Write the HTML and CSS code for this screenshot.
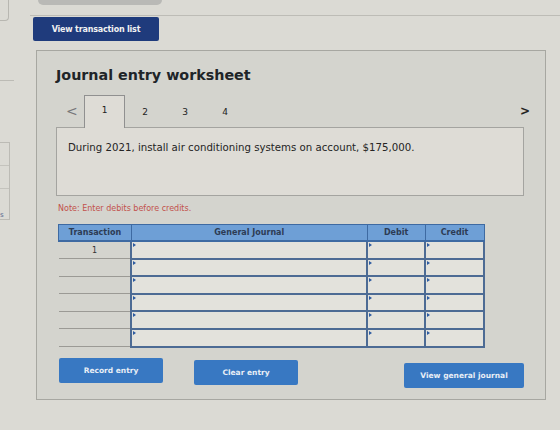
FILE: index.html
```html
<!DOCTYPE html>
<html lang="en">
<head>
  <meta charset="UTF-8" />
  <meta name="viewport" content="width=device-width, initial-scale=1.0" />
  <title>Journal entry worksheet</title>
  <link rel="stylesheet" href="styles.css">
</head>
<body>
  <div class="screen">
    <div class="side">
      <div class="side-top"></div>
      <div class="side-rule"></div>
      <div class="side-list">
        <div class="side-item"></div>
        <div class="side-item"></div>
        <div class="side-item"><span class="side-mark">s</span></div>
      </div>
    </div>

    <div class="main">
      <div class="topbar"><div class="topbar-stub"></div></div>
      <button class="btn-dark">View transaction list</button>

      <div class="panel">
        <h1>Journal entry worksheet</h1>

        <div class="tabs">
          <span class="arrow">&lt;</span>
          <span class="tab active">1</span>
          <span class="tab">2</span>
          <span class="tab">3</span>
          <span class="tab">4</span>
          <span class="arrow next">&gt;</span>
        </div>

        <div class="question">
          During 2021, install air conditioning systems on account, $175,000.
        </div>

        <p class="note">Note: Enter debits before credits.</p>

        <table class="journal">
          <thead>
            <tr>
              <th class="c-tr">Transaction</th>
              <th class="c-gj">General Journal</th>
              <th class="c-dr">Debit</th>
              <th class="c-cr">Credit</th>
            </tr>
          </thead>
          <tbody>
            <tr><td class="c-tr">1</td><td class="in"></td><td class="in"></td><td class="in"></td></tr>
            <tr><td class="c-tr"></td><td class="in"></td><td class="in"></td><td class="in"></td></tr>
            <tr><td class="c-tr"></td><td class="in"></td><td class="in"></td><td class="in"></td></tr>
            <tr><td class="c-tr"></td><td class="in"></td><td class="in"></td><td class="in"></td></tr>
            <tr><td class="c-tr"></td><td class="in"></td><td class="in"></td><td class="in"></td></tr>
            <tr><td class="c-tr"></td><td class="in"></td><td class="in"></td><td class="in"></td></tr>
          </tbody>
        </table>

        <div class="actions">
          <button class="btn">Record entry</button>
          <button class="btn">Clear entry</button>
          <button class="btn wide">View general journal</button>
        </div>
      </div>
    </div>
  </div>
</body>
</html>
```

FILE: styles.css
```css
body {
  margin: 0;
  background: #dbdad4;
  font-family: "DejaVu Sans", Verdana, sans-serif;
  color: #222;
}
.screen {
  display: flex;
  height: 430px;
  overflow: hidden;
}

/* left sidebar edge */
.side {
  width: 14px;
  flex: none;
  display: flex;
  flex-direction: column;
}
.side-top {
  height: 20px;
  width: 8px;
  border: 1px solid #b8b7b1;
  border-left: none;
  border-top: none;
  border-radius: 0 0 4px 0;
}
.side-rule {
  margin-top: 59px;
  height: 0;
  border-top: 1px solid #bcbbb5;
}
.side-list {
  margin-top: 61px;
  width: 9px;
  border: 1px solid #bcbbb5;
  border-left: none;
}
.side-item {
  height: 22px;
  border-bottom: 1px solid #c4c3bd;
}
.side-item:last-child {
  border-bottom: none;
  height: 30px;
  position: relative;
}
.side-mark {
  position: absolute;
  left: 0;
  top: 22px;
  font-size: 7px;
  color: #5a6a90;
}

.main {
  flex: 1;
  display: flex;
  flex-direction: column;
  align-items: flex-start;
}
.topbar {
  align-self: stretch;
  height: 15px;
  margin-left: 16px;
  border-bottom: 1px solid #bdbcb6;
}
.topbar-stub {
  margin-left: 8px;
  width: 124px;
  height: 5px;
  background: #b9b9b6;
  border-radius: 0 0 5px 5px;
}

.btn-dark {
  margin: 1px 0 0 19px;
  width: 126px;
  height: 24px;
  border: none;
  border-radius: 2px;
  background: #1f3b7c;
  color: #f2f2f2;
  font-family: inherit;
  font-size: 8px;
  font-weight: bold;
  letter-spacing: -0.2px;
}

.panel {
  margin: 9px 0 0 22px;
  width: 510px;
  height: 350px;
  box-sizing: border-box;
  background: #d4d4ce;
  border: 1px solid #a7a7a1;
  padding: 0 0 0 19px;
}
.panel h1 {
  margin: 16px 0 0 0;
  font-size: 14.3px;
  font-weight: bold;
  color: #202428;
}

.tabs {
  margin-top: 12px;
  display: flex;
  align-items: flex-end;
  height: 32px;
  width: 468px;
}
.tab {
  width: 40px;
  height: 27px;
  box-sizing: border-box;
  text-align: center;
  font-size: 9px;
  padding-top: 7px;
  color: #222;
}
.tab.active {
  height: 33px;
  width: 41px;
  padding-top: 9px;
  background: #dedcd6;
  border: 1px solid #909090;
  border-bottom: none;
  margin-bottom: -1px;
}
.arrow {
  width: 28px;
  font-size: 14px;
  color: #77777a;
  padding: 0 0 8px 10px;
  box-sizing: border-box;
}
.arrow.next {
  margin-left: auto;
  margin-right: -14px;
  color: #222;
  font-weight: bold;
  font-size: 12px;
  padding-bottom: 9px;
}

.question {
  width: 468px;
  height: 69px;
  box-sizing: border-box;
  margin: 0;
  background: #dedcd6;
  border: 1px solid #a4a4a0;
  padding: 14px 11px;
  font-size: 10.2px;
  color: #242424;
}

.note {
  margin: 8px 0 0 2px;
  font-size: 8px;
  color: #c2514b;
}

.journal {
  margin: 11px 0 0 2px;
  width: 427px;
  border-collapse: collapse;
  font-size: 8px;
}
.journal th {
  background: #6e9fd6;
  color: #2d3c54;
  height: 15px;
  padding: 0;
  border: 1px solid #3e6aa2;
  border-bottom: 2px solid #3e6aa2;
}
.c-tr { width: 72px; }
.c-gj { width: 235px; }
.c-dr { width: 57px; }
.c-cr { width: 58px; }
.journal td {
  height: 17.6px;
  padding: 0;
  box-sizing: border-box;
}
.journal td.c-tr {
  text-align: center;
  vertical-align: top;
  padding-top: 4px;
  color: #333;
  border-bottom: 1px solid #9b9a95;
}
.journal td.in {
  background: #e3e2dc;
  border: 2px solid #4d6b94;
  border-top-width: 1px;
  position: relative;
}
.journal td.in::before {
  content: "";
  position: absolute;
  left: 1px;
  top: 1px;
  border-left: 3px solid #2c5aa0;
  border-top: 2px solid transparent;
  border-bottom: 2px solid transparent;
}

.actions {
  margin-top: 10px;
  display: flex;
  align-items: flex-start;
  width: 468px;
}
.btn {
  width: 104px;
  height: 25px;
  border: none;
  border-radius: 2px;
  background: #3878c2;
  color: #e8eef6;
  font-family: inherit;
  font-size: 7.5px;
  font-weight: bold;
  margin-left: 3px;
}
.btn + .btn {
  margin-left: 31px;
  margin-top: 2px;
}
.btn.wide {
  width: 120px;
  margin-left: auto;
  margin-top: 5px;
}
```
